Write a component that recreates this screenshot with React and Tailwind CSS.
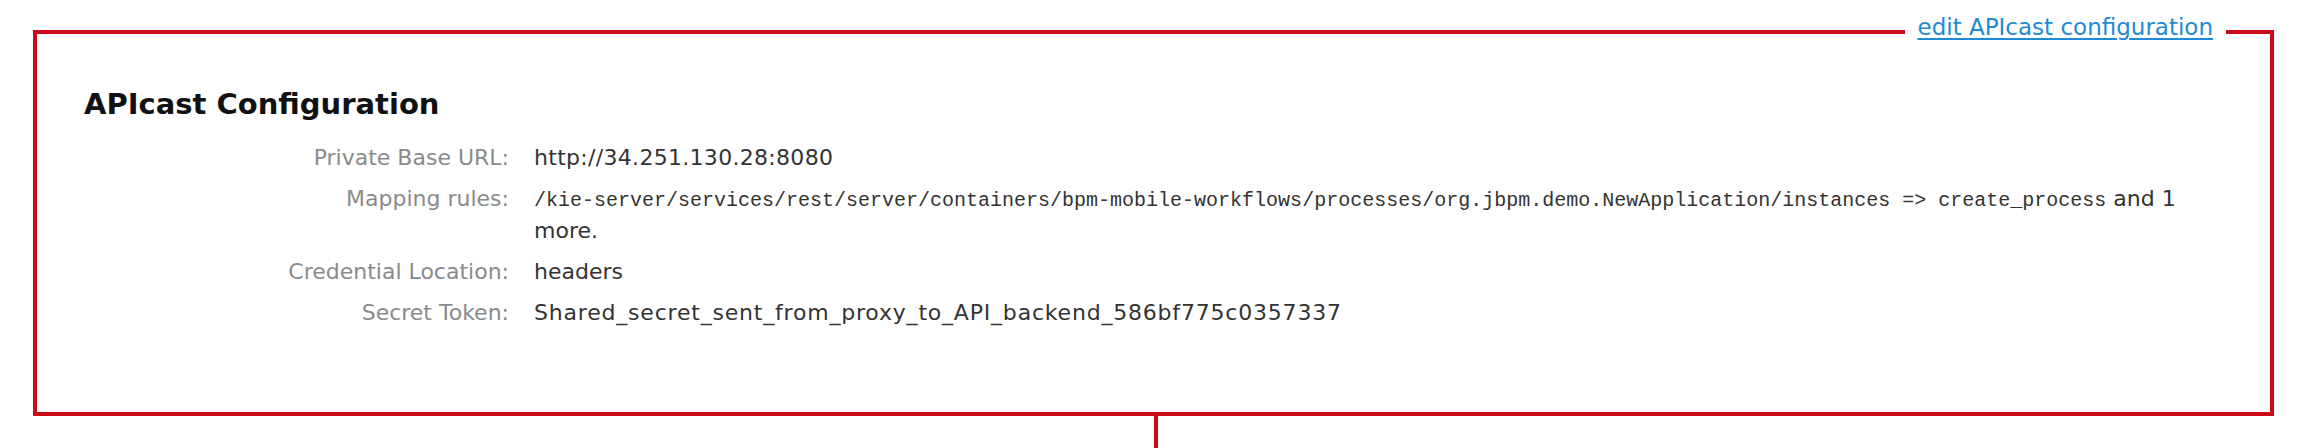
import React from "react";

const rows = [
  { label: "Private Base URL:", value: <span className="tracking-[0.3px]">http://34.251.130.28:8080</span> },
  {
    label: "Mapping rules:",
    value: (
      <span>
        <span className="font-['Liberation_Mono',monospace] text-[20px] leading-[20px]">
          /kie-server/services/rest/server/containers/bpm-mobile-workflows/processes/org.jbpm.demo.NewApplication/instances =&gt; create_process
        </span>{" "}
        and 1 more.
      </span>
    ),
  },
  { label: "Credential Location:", value: <span>headers</span> },
  {
    label: "Secret Token:",
    value: (
      <span className="tracking-[0.8px]">
        Shared_secret_sent_from_proxy_to_API_backend_586bf775c0357337
      </span>
    ),
  },
];

export default function App() {
  return (
    <div className="w-[2302px] h-[448px] bg-white pt-[30px] pl-[33px] font-['DejaVu_Sans',sans-serif] overflow-hidden">
      <div className="relative w-[2241px] h-[386px] border-4 border-[#cc0a17] pt-[52px] pl-[47px]">
        <a
          href="#"
          className="absolute right-[44px] top-[-21px] bg-white px-[13px] text-[23px] leading-[28px] text-[#1f8ad3] underline decoration-[2px] underline-offset-[3px]"
        >
          edit APIcast configuration
        </a>
        <h1 className="text-[29px] leading-[36px] font-bold text-[#111] mb-[20px]">
          APIcast Configuration
        </h1>
        <dl className="grid grid-cols-[425px_1676px] gap-x-[25px] gap-y-[9px] text-[22px] leading-[32px]">
          {rows.map((r) => (
            <React.Fragment key={r.label}>
              <dt className="text-right text-[#8a8a8a]">{r.label}</dt>
              <dd className="text-[#333]">{r.value}</dd>
            </React.Fragment>
          ))}
        </dl>
      </div>
      <div className="ml-[1121px] w-[4px] h-[40px] bg-[#cc0a17]" />
    </div>
  );
}
